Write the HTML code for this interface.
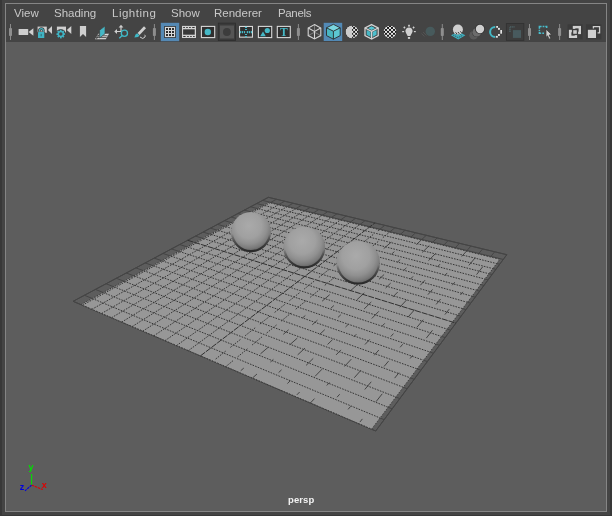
<!DOCTYPE html>
<html><head><meta charset="utf-8">
<style>
html,body{margin:0;padding:0}
body{width:612px;height:516px;overflow:hidden;position:relative;background:#444444;font-family:"Liberation Sans",sans-serif}
.ol{position:absolute;background:#383838}
#panel{position:absolute;left:5px;top:3px;width:600px;height:507px;border:1px solid #858585;background:#444444}
#vp{position:absolute;left:6px;top:42px;width:600px;height:469px;background:#5d5d5d}
.mi{position:absolute;will-change:transform;top:6px;font-size:11.5px;color:#c8c8c8;line-height:14px;white-space:nowrap}
#persp{position:absolute;left:288.3px;top:494px;font-size:9.5px;font-weight:bold;color:#f2f2f2;letter-spacing:0.1px;will-change:transform}
</style></head><body>
<div class="ol" style="left:0;top:0;width:2px;height:516px"></div>
<div class="ol" style="left:610px;top:0;width:2px;height:516px"></div>
<div class="ol" style="left:0;top:515px;width:612px;height:1px"></div>
<div id="panel"></div>
<div id="vp"></div>
<div class="mi" style="left:14px">View</div>
<div class="mi" style="left:53.5px">Shading</div>
<div class="mi" style="left:112px;letter-spacing:0.5px">Lighting</div>
<div class="mi" style="left:170.5px">Show</div>
<div class="mi" style="left:213.7px">Renderer</div>
<div class="mi" style="left:278px;letter-spacing:-0.35px">Panels</div>
<svg width="612" height="516" style="position:absolute;left:0;top:0">
<defs>
<clipPath id="cp"><polygon points="80.87,304.63 268.68,202.47 499.84,259.31 371.55,429.22"/></clipPath>
<radialGradient id="sg" cx="0.45" cy="0.34" r="0.7" fx="0.45" fy="0.34">
<stop offset="0" stop-color="#aaaaaa"/><stop offset="0.45" stop-color="#a0a0a0"/><stop offset="0.65" stop-color="#909090"/><stop offset="0.8" stop-color="#7b7b7b"/><stop offset="0.92" stop-color="#606060"/><stop offset="1" stop-color="#474747"/>
</radialGradient>
<linearGradient id="rim" x1="0" y1="0" x2="0" y2="1"><stop offset="0" stop-color="#000" stop-opacity="0"/><stop offset="0.55" stop-color="#000" stop-opacity="0"/><stop offset="0.78" stop-color="#2a2a2a" stop-opacity="0.6"/><stop offset="1" stop-color="#2a2a2a" stop-opacity="1"/></linearGradient>
</defs>
<g stroke="#454545" stroke-width="1" fill="none">
<line x1="73.10" y1="301.30" x2="375.70" y2="431.00"/>
<line x1="73.10" y1="301.30" x2="268.40" y2="197.30"/>
<line x1="84.45" y1="295.25" x2="384.12" y2="419.68"/>
<line x1="82.37" y1="305.27" x2="276.48" y2="199.25"/>
<line x1="95.42" y1="289.41" x2="392.14" y2="408.89"/>
<line x1="91.85" y1="309.34" x2="284.70" y2="201.22"/>
<line x1="106.03" y1="283.76" x2="399.81" y2="398.57"/>
<line x1="101.55" y1="313.50" x2="293.05" y2="203.24"/>
<line x1="116.29" y1="278.30" x2="407.14" y2="388.71"/>
<line x1="111.49" y1="317.76" x2="301.54" y2="205.28"/>
<line x1="126.22" y1="273.01" x2="414.16" y2="379.28"/>
<line x1="121.67" y1="322.12" x2="310.18" y2="207.36"/>
<line x1="135.83" y1="267.89" x2="420.88" y2="370.24"/>
<line x1="132.10" y1="326.59" x2="318.95" y2="209.47"/>
<line x1="145.15" y1="262.93" x2="427.33" y2="361.57"/>
<line x1="142.78" y1="331.17" x2="327.88" y2="211.62"/>
<line x1="154.18" y1="258.12" x2="433.51" y2="353.26"/>
<line x1="153.73" y1="335.86" x2="336.96" y2="213.81"/>
<line x1="162.94" y1="253.46" x2="439.45" y2="345.27"/>
<line x1="164.96" y1="340.67" x2="346.20" y2="216.03"/>
<line x1="171.43" y1="248.94" x2="445.16" y2="337.59"/>
<line x1="176.48" y1="345.61" x2="355.60" y2="218.29"/>
<line x1="179.68" y1="244.55" x2="450.65" y2="330.21"/>
<line x1="188.30" y1="350.68" x2="365.16" y2="220.60"/>
<line x1="195.47" y1="236.14" x2="461.03" y2="316.25"/>
<line x1="212.89" y1="361.22" x2="384.80" y2="225.33"/>
<line x1="203.03" y1="232.11" x2="465.94" y2="309.64"/>
<line x1="225.69" y1="366.70" x2="394.89" y2="227.76"/>
<line x1="210.38" y1="228.20" x2="470.68" y2="303.28"/>
<line x1="238.83" y1="372.34" x2="405.16" y2="230.23"/>
<line x1="217.53" y1="224.39" x2="475.25" y2="297.13"/>
<line x1="252.35" y1="378.13" x2="415.63" y2="232.75"/>
<line x1="224.49" y1="220.68" x2="479.66" y2="291.19"/>
<line x1="266.24" y1="384.08" x2="426.28" y2="235.31"/>
<line x1="231.26" y1="217.08" x2="483.93" y2="285.45"/>
<line x1="280.53" y1="390.21" x2="437.14" y2="237.93"/>
<line x1="237.86" y1="213.56" x2="488.06" y2="279.90"/>
<line x1="295.24" y1="396.51" x2="448.20" y2="240.59"/>
<line x1="244.28" y1="210.14" x2="492.05" y2="274.54"/>
<line x1="310.38" y1="403.00" x2="459.47" y2="243.30"/>
<line x1="250.54" y1="206.81" x2="495.91" y2="269.34"/>
<line x1="325.98" y1="409.69" x2="470.96" y2="246.07"/>
<line x1="256.65" y1="203.56" x2="499.66" y2="264.31"/>
<line x1="342.05" y1="416.58" x2="482.67" y2="248.89"/>
<line x1="262.60" y1="200.39" x2="503.28" y2="259.43"/>
<line x1="358.61" y1="423.68" x2="494.62" y2="251.77"/>
<line x1="268.40" y1="197.30" x2="506.80" y2="254.70"/>
<line x1="375.70" y1="431.00" x2="506.80" y2="254.70"/>
<polygon points="73.10,301.30 268.40,197.30 506.80,254.70 375.70,431.00"/>
</g>
<polygon points="80.87,304.63 268.68,202.47 499.84,259.31 371.55,429.22" fill="#979797"/>
<g clip-path="url(#cp)" stroke="#363636" stroke-width="1" stroke-dasharray="1.6 1.2" fill="none">
<line x1="73.10" y1="301.30" x2="375.70" y2="431.00"/>
<line x1="84.45" y1="295.25" x2="384.12" y2="419.68"/>
<line x1="95.42" y1="289.41" x2="392.14" y2="408.89"/>
<line x1="106.03" y1="283.76" x2="399.81" y2="398.57"/>
<line x1="116.29" y1="278.30" x2="407.14" y2="388.71"/>
<line x1="126.22" y1="273.01" x2="414.16" y2="379.28"/>
<line x1="135.83" y1="267.89" x2="420.88" y2="370.24"/>
<line x1="145.15" y1="262.93" x2="427.33" y2="361.57"/>
<line x1="154.18" y1="258.12" x2="433.51" y2="353.26"/>
<line x1="162.94" y1="253.46" x2="439.45" y2="345.27"/>
<line x1="171.43" y1="248.94" x2="445.16" y2="337.59"/>
<line x1="179.68" y1="244.55" x2="450.65" y2="330.21"/>
<line x1="195.47" y1="236.14" x2="461.03" y2="316.25"/>
<line x1="203.03" y1="232.11" x2="465.94" y2="309.64"/>
<line x1="210.38" y1="228.20" x2="470.68" y2="303.28"/>
<line x1="217.53" y1="224.39" x2="475.25" y2="297.13"/>
<line x1="224.49" y1="220.68" x2="479.66" y2="291.19"/>
<line x1="231.26" y1="217.08" x2="483.93" y2="285.45"/>
<line x1="237.86" y1="213.56" x2="488.06" y2="279.90"/>
<line x1="244.28" y1="210.14" x2="492.05" y2="274.54"/>
<line x1="250.54" y1="206.81" x2="495.91" y2="269.34"/>
<line x1="256.65" y1="203.56" x2="499.66" y2="264.31"/>
<line x1="262.60" y1="200.39" x2="503.28" y2="259.43"/>
<line x1="268.40" y1="197.30" x2="506.80" y2="254.70"/>
<line x1="73.10" y1="301.30" x2="268.40" y2="197.30"/>
<line x1="82.37" y1="305.27" x2="276.48" y2="199.25"/>
<line x1="91.85" y1="309.34" x2="284.70" y2="201.22"/>
<line x1="101.55" y1="313.50" x2="293.05" y2="203.24"/>
<line x1="111.49" y1="317.76" x2="301.54" y2="205.28"/>
<line x1="121.67" y1="322.12" x2="310.18" y2="207.36"/>
<line x1="132.10" y1="326.59" x2="318.95" y2="209.47"/>
<line x1="142.78" y1="331.17" x2="327.88" y2="211.62"/>
<line x1="153.73" y1="335.86" x2="336.96" y2="213.81"/>
<line x1="164.96" y1="340.67" x2="346.20" y2="216.03"/>
<line x1="176.48" y1="345.61" x2="355.60" y2="218.29"/>
<line x1="188.30" y1="350.68" x2="365.16" y2="220.60"/>
</g>
<g clip-path="url(#cp)" stroke="#363636" stroke-width="1" stroke-dasharray="1.6 1.2 1.6 1.2 1.6 1.2 1.6 1.2 1.6 6" fill="none">
<line x1="212.89" y1="361.22" x2="384.80" y2="225.33" stroke-dashoffset="15.3"/>
<line x1="225.69" y1="366.70" x2="394.89" y2="227.76" stroke-dashoffset="3.4"/>
</g>
<g clip-path="url(#cp)" stroke="#3a3a3a" stroke-width="0.9" stroke-dasharray="7 18 4 22 10 20" fill="none">
<line x1="238.83" y1="372.34" x2="405.16" y2="230.23" stroke-dashoffset="22.5"/>
<line x1="252.35" y1="378.13" x2="415.63" y2="232.75" stroke-dashoffset="0.8"/>
<line x1="266.24" y1="384.08" x2="426.28" y2="235.31" stroke-dashoffset="8.1"/>
<line x1="280.53" y1="390.21" x2="437.14" y2="237.93" stroke-dashoffset="15.4"/>
<line x1="295.24" y1="396.51" x2="448.20" y2="240.59" stroke-dashoffset="22.7"/>
<line x1="310.38" y1="403.00" x2="459.47" y2="243.30" stroke-dashoffset="1.0"/>
<line x1="325.98" y1="409.69" x2="470.96" y2="246.07" stroke-dashoffset="8.3"/>
<line x1="342.05" y1="416.58" x2="482.67" y2="248.89" stroke-dashoffset="15.6"/>
<line x1="358.61" y1="423.68" x2="494.62" y2="251.77" stroke-dashoffset="22.9"/>
<line x1="375.70" y1="431.00" x2="506.80" y2="254.70" stroke-dashoffset="1.2"/>
</g>
<g stroke="#3c3c3c" stroke-width="1" stroke-dasharray="1.5 1.5" fill="none">
<polygon points="80.87,304.63 268.68,202.47 499.84,259.31 371.55,429.22"/>
</g>
<g stroke="#303030" stroke-width="1" stroke-dasharray="6 1" fill="none">
<line x1="187.69" y1="240.28" x2="455.94" y2="323.10"/>
<line x1="200.44" y1="355.88" x2="374.90" y2="222.94"/>
</g>
<circle cx="251" cy="232.1" r="20" fill="url(#sg)"/><circle cx="251" cy="232.1" r="19.0" fill="none" stroke="url(#rim)" stroke-width="2.2"/>
<circle cx="304.3" cy="247.5" r="20.9" fill="url(#sg)"/><circle cx="304.3" cy="247.5" r="19.9" fill="none" stroke="url(#rim)" stroke-width="2.2"/>
<circle cx="358.1" cy="262.7" r="21.8" fill="url(#sg)"/><circle cx="358.1" cy="262.7" r="20.8" fill="none" stroke="url(#rim)" stroke-width="2.2"/>

</svg>
<svg width="612" height="45" style="position:absolute;left:0;top:0">
<defs>
<pattern id="chk" x="387" y="27" width="4" height="3.9" patternUnits="userSpaceOnUse"><rect width="4" height="3.9" fill="#e6e6e6"/><rect width="2" height="1.95" fill="#1a1a1a"/><rect x="2" y="1.95" width="2" height="1.95" fill="#1a1a1a"/></pattern>
<pattern id="chk2" x="353.15" y="27" width="3.9" height="3.9" patternUnits="userSpaceOnUse"><rect width="3.9" height="3.9" fill="#e6e6e6"/><rect width="1.95" height="1.95" fill="#1a1a1a"/><rect x="1.95" y="1.95" width="1.95" height="1.95" fill="#1a1a1a"/></pattern>
</defs>
<!-- separators -->
<rect x="10.0" y="24" width="1" height="16" fill="#8a8a8a"/><rect x="9.0" y="28" width="3" height="8" rx="0.8" fill="#8e8e8e"/>
<rect x="153.9" y="24" width="1" height="16" fill="#8a8a8a"/><rect x="152.9" y="28" width="3" height="8" rx="0.8" fill="#8e8e8e"/>
<rect x="297.9" y="24" width="1" height="16" fill="#8a8a8a"/><rect x="296.9" y="28" width="3" height="8" rx="0.8" fill="#8e8e8e"/>
<rect x="441.8" y="24" width="1" height="16" fill="#8a8a8a"/><rect x="440.8" y="28" width="3" height="8" rx="0.8" fill="#8e8e8e"/>
<rect x="529.0" y="24" width="1" height="16" fill="#8a8a8a"/><rect x="528.0" y="28" width="3" height="8" rx="0.8" fill="#8e8e8e"/>
<rect x="559.1" y="24" width="1" height="16" fill="#8a8a8a"/><rect x="558.1" y="28" width="3" height="8" rx="0.8" fill="#8e8e8e"/>
<!-- camera -->
<g fill="#cfcfcf">
<rect x="18.6" y="28.9" width="9.6" height="6.2" rx="0.6"/>
<polygon points="28.6,32 33.4,28.2 33.4,35.8"/>
<!-- camera lock -->
<rect x="37.6" y="26.6" width="9.2" height="6.2"/>
<polygon points="47.9,30 52,25.9 52,34.1"/>
<!-- camera gear -->
<rect x="56.9" y="26.6" width="9.1" height="6.2"/>
<polygon points="66.8,30 71.3,25.9 71.3,34.1"/>
<!-- bookmark -->
<polygon points="79.9,25.9 86.1,25.9 86.1,37 83,34 79.9,37"/>
</g>
<!-- lock -->
<path d="M39.4 31.6 v-1.1 a1.95 1.95 0 0 1 3.9 0 v1.1" fill="none" stroke="#444" stroke-width="2.8"/>
<rect x="37.3" y="31.4" width="7.8" height="7.2" rx="0.8" fill="#444"/>
<path d="M39.4 31.6 v-1.1 a1.95 1.95 0 0 1 3.9 0 v1.1" fill="none" stroke="#3fb3c3" stroke-width="1.2"/>
<rect x="38" y="31.9" width="6.3" height="6.1" rx="0.5" fill="#3fb3c3"/>
<rect x="40.7" y="33.9" width="0.9" height="2.4" fill="#2d5f66"/>
<!-- gear -->
<circle cx="60.8" cy="34.1" r="5.2" fill="#444"/>
<g fill="#3fb3c3"><rect x="59.90" y="29.80" width="1.7" height="1.8" transform="rotate(0 60.8 34.1)"/><rect x="59.90" y="29.80" width="1.7" height="1.8" transform="rotate(45 60.8 34.1)"/><rect x="59.90" y="29.80" width="1.7" height="1.8" transform="rotate(90 60.8 34.1)"/><rect x="59.90" y="29.80" width="1.7" height="1.8" transform="rotate(135 60.8 34.1)"/><rect x="59.90" y="29.80" width="1.7" height="1.8" transform="rotate(180 60.8 34.1)"/><rect x="59.90" y="29.80" width="1.7" height="1.8" transform="rotate(225 60.8 34.1)"/><rect x="59.90" y="29.80" width="1.7" height="1.8" transform="rotate(270 60.8 34.1)"/><rect x="59.90" y="29.80" width="1.7" height="1.8" transform="rotate(315 60.8 34.1)"/></g>
<circle cx="60.8" cy="34.1" r="2.5" fill="none" stroke="#3fb3c3" stroke-width="1.5"/>
<!-- plane icon -->
<polygon points="98.3,33.8 109,33.8 105.8,39.2 95,39.2" fill="#dcdcdc"/>
<path d="M96 35.8 H107.6 M95.5 37.6 H106.6" stroke="#444" stroke-width="0.9"/>
<path d="M99.6 33.8 L96.4 39.2" stroke="#444" stroke-width="1"/>
<polygon points="99.6,30.2 105,26 105,33.8 99.6,38" fill="#45b8c6" stroke="#444" stroke-width="0.7"/>
<!-- move-magnify -->
<g stroke="#cfcfcf" stroke-width="1.2" fill="none">
<path d="M121 26 v6 M116 31.5 h5"/>
</g>
<polygon points="121,24.8 118.6,27.4 123.4,27.4" fill="#cfcfcf"/>
<polygon points="114.3,31.5 117,29.1 117,33.9" fill="#cfcfcf"/>
<circle cx="124.4" cy="33.3" r="3.1" fill="none" stroke="#3fb8c6" stroke-width="1.3"/>
<line x1="122.2" y1="35.6" x2="119.3" y2="38.3" stroke="#3fb8c6" stroke-width="1.4"/>
<!-- pencil -->
<polygon points="137.6,33 144,26.2 146,28.2 139.6,35" fill="#cfcfcf"/>
<polygon points="134.4,37.6 135.5,34.6 137.2,33.2 139.5,35.5 138,37 " fill="#3fb8c6"/>
<path d="M140 37 q3 3 5 0 q0.6 -1.4 -0.4 -2.2" stroke="#cfcfcf" stroke-width="1" fill="none"/>
<!-- grid button -->
<rect x="160.8" y="22.8" width="18.4" height="18.4" fill="#5589b4"/>
<rect x="164.1" y="26.1" width="11.8" height="11.8" fill="#333"/><rect x="164.9" y="26.9" width="10.2" height="10.2" fill="#dadada"/><rect x="166.05" y="28.05" width="1.9" height="1.9" fill="#1a1a1a"/><rect x="166.05" y="31.05" width="1.9" height="1.9" fill="#1a1a1a"/><rect x="166.05" y="34.05" width="1.9" height="1.9" fill="#1a1a1a"/><rect x="169.05" y="28.05" width="1.9" height="1.9" fill="#1a1a1a"/><rect x="169.05" y="31.05" width="1.9" height="1.9" fill="#1a1a1a"/><rect x="169.05" y="34.05" width="1.9" height="1.9" fill="#1a1a1a"/><rect x="172.05" y="28.05" width="1.9" height="1.9" fill="#1a1a1a"/><rect x="172.05" y="31.05" width="1.9" height="1.9" fill="#1a1a1a"/><rect x="172.05" y="34.05" width="1.9" height="1.9" fill="#1a1a1a"/>
<!-- film gate -->
<rect x="182" y="25.9" width="14" height="12.1" fill="#d2d2d2"/>
<rect x="183.1" y="29.3" width="11.65" height="5.4" fill="#383838"/>
<g fill="#333"><rect x="183.1" y="26.95" width="1.90" height="1" rx="0.4"/><rect x="186.1" y="26.95" width="1.80" height="1" rx="0.4"/><rect x="189" y="26.95" width="1.90" height="1" rx="0.4"/><rect x="192.1" y="26.95" width="2.65" height="1" rx="0.4"/><rect x="183.1" y="36.1" width="2.60" height="1" rx="0.4"/><rect x="187.1" y="36.1" width="1.75" height="1" rx="0.4"/><rect x="190.1" y="36.1" width="1.70" height="1" rx="0.4"/><rect x="193" y="36.1" width="1.75" height="1" rx="0.4"/></g>
<!-- res gate -->
<rect x="201.4" y="26.4" width="13.3" height="11.2" fill="#2f2f2f" stroke="#d8d8d8" stroke-width="1.1"/>
<circle cx="207.8" cy="32" r="3.2" fill="#45b8c6"/>
<!-- gate mask -->
<rect x="218.3" y="23.1" width="17.2" height="17.5" fill="#3a3a3a" stroke="#2e2e2e" stroke-width="0.8"/>
<rect x="220" y="25.5" width="14" height="13" fill="#555555"/>
<circle cx="226.9" cy="32" r="3.9" fill="#3c3c3c"/>
<!-- field chart -->
<rect x="239.55" y="26.45" width="12.9" height="10.7" fill="#2f2f2f" stroke="#d8d8d8" stroke-width="1.1"/>
<g fill="#48bccb"><rect x="239.75" y="30.9" width="1.3" height="2.3" rx="0.5"/><rect x="241.75" y="30.9" width="1.3" height="2.3" rx="0.5"/><rect x="243.85" y="30.9" width="1.3" height="2.3" rx="0.5"/><rect x="246.75" y="30.9" width="1.3" height="2.3" rx="0.5"/><rect x="248.75" y="30.9" width="1.3" height="2.3" rx="0.5"/><rect x="250.75" y="30.9" width="1.3" height="2.3" rx="0.5"/><rect x="244.85" y="26.80" width="2.3" height="1.2" rx="0.5"/><rect x="244.85" y="28.90" width="2.3" height="1.2" rx="0.5"/><rect x="244.85" y="33.90" width="2.3" height="1.2" rx="0.5"/><rect x="244.85" y="36.00" width="2.3" height="1.2" rx="0.5"/></g>
<!-- safe action -->
<rect x="258.4" y="26.4" width="13.3" height="11.2" fill="#2f2f2f" stroke="#d8d8d8" stroke-width="1.1"/>
<polygon points="260.2,36.3 263,31.4 265.8,36.3" fill="#45b8c6"/>
<circle cx="267.3" cy="30.5" r="2.6" fill="#45b8c6"/>
<!-- text T -->
<rect x="277.3" y="26.4" width="13" height="11.2" fill="#2f2f2f" stroke="#d8d8d8" stroke-width="1.1"/>
<text x="283.8" y="36.2" font-family="Liberation Serif" font-weight="bold" font-size="11.5" fill="#45b8c6" text-anchor="middle">T</text>
<!-- wire cube -->
<g fill="none" stroke="#d4d4d4" stroke-width="1.1">
<polygon points="314.5,24.6 320.8,28 320.8,35.6 314.5,39 308.2,35.6 308.2,28"/>
<path d="M308.2 28 L314.5 31.4 L320.8 28 M314.5 31.4 V39"/>
<path d="M314.5 24.6 V32.2 L308.2 35.6 M314.5 32.2 L320.8 35.6" stroke-opacity="0.45" stroke-width="0.9"/>
</g>
<!-- shaded cube button -->
<rect x="323.7" y="22.8" width="18.5" height="18.2" fill="#5289b5"/>
<polygon points="333.4,24.3 340.2,27.8 333.4,31.2 326.5,27.8" fill="#7ad6e0"/>
<polygon points="326.5,27.8 333.4,31.2 333.4,39.2 326.5,35.6" fill="#4ab6c2"/>
<polygon points="340.2,27.8 333.4,31.2 333.4,39.2 340.2,35.6" fill="#5cc6d2"/>
<g fill="none" stroke="#2a2a2a" stroke-width="0.9">
<polygon points="333.4,24.3 340.2,27.8 340.2,35.6 333.4,39.2 326.5,35.6 326.5,27.8"/>
<path d="M326.5 27.8 L333.4 31.2 L340.2 27.8 M333.4 31.2 V39.2"/>
</g>
<!-- half sphere -->
<circle cx="352" cy="32" r="6.2" fill="url(#chk2)"/>
<path d="M352.1 25.8 a6.2 6.2 0 0 0 0 12.4 z" fill="#cccccc"/>
<!-- WOS cube -->
<polygon points="371.6,24.6 378.2,28 378.2,35.6 371.6,39 365,35.6 365,28" fill="#3a3a3a"/>
<polygon points="371.6,26.3 375.3,28.2 371.6,30 367.9,28.2" fill="#55c6d4"/>
<polygon points="366.6,30 370.6,32.1 370.6,37 366.6,34.8" fill="#46b6c4"/>
<polygon points="376.6,30 372.6,32.1 372.6,37 376.6,34.8" fill="#4ec0ce"/>
<g fill="none" stroke="#d4d4d4" stroke-width="1.3">
<polygon points="371.6,24.6 378.2,28 378.2,35.6 371.6,39 365,35.6 365,28"/>
<path d="M365 28 L371.6 31.4 L378.2 28 M371.6 31.4 V39"/>
</g>
<!-- checker sphere -->
<circle cx="390" cy="32" r="6.25" fill="url(#chk)"/>
<!-- light bulb -->
<g fill="#d0d0d0">
<path d="M409 27.6 c2.1 0 3.6 1.6 3.6 3.5 c0 1.5 -1.3 2.7 -2.2 4.9 h-2.8 c-0.9 -2.2 -2.2 -3.4 -2.2 -4.9 c0 -1.9 1.5 -3.5 3.6 -3.5z"/>
<rect x="407.9" y="37" width="2.2" height="1.9"/>
<rect x="408.1" y="24.8" width="1.8" height="1.8"/>
<rect x="402.2" y="31" width="1.9" height="1.2"/>
<rect x="413.9" y="31" width="1.9" height="1.2"/>
<rect x="403.6" y="26.7" width="1.6" height="1.6" transform="rotate(45 404.4 27.5)"/>
<rect x="412.8" y="26.7" width="1.6" height="1.6" transform="rotate(45 413.6 27.5)"/>
</g>
<!-- shadows (dim) -->
<circle cx="430.3" cy="31.4" r="4.7" fill="#475a5c"/>
<path d="M421.5 33.5 l3 3 M423 32 l3.5 3.5" stroke="#555" stroke-width="0.9"/>
<!-- AO sphere -->
<polygon points="451,35.3 454.6,33.4 462,33.4 465.4,35.3 458.2,39.5" fill="#3fb0c0"/>
<path d="M453.2 35.1 L458.2 37.6 L463.2 35.1" fill="none" stroke="#37494c" stroke-width="0.9" stroke-dasharray="1.3 0.9"/><path d="M455.5 34.2 H461" stroke="#37494c" stroke-width="0.8" stroke-dasharray="1.2 1"/>
<circle cx="457.9" cy="29.6" r="5" fill="#cfcfcf"/>
<path d="M455.6 32.3 l1.4 1.8 M458 32 l1.4 1.8 M460.4 31.3 l1.2 1.6" stroke="#3a3a3a" stroke-width="1"/>
<!-- motion blur -->
<circle cx="473.6" cy="35.3" r="4.3" fill="#5a5a5a"/>
<circle cx="476.8" cy="32.2" r="4.9" fill="#404040"/>
<circle cx="476.8" cy="32.2" r="4.3" fill="#6c6c6c"/>
<circle cx="480" cy="29" r="5" fill="#333333"/>
<circle cx="480" cy="29" r="4.2" fill="#cfcfcf"/>
<!-- AA -->
<path d="M495.2 26.9 a5.1 5.1 0 0 0 0 10.2" fill="none" stroke="#44b8c6" stroke-width="2"/>
<g fill="#e4e4e4">
<rect x="496.2" y="26" width="1.8" height="1.8"/>
<rect x="498" y="27.9" width="1.9" height="1.9"/>
<rect x="500.3" y="30" width="1.7" height="3.7"/>
<rect x="498" y="34" width="1.9" height="1.9"/>
<rect x="495.9" y="35.9" width="1.9" height="1.8"/>
</g>
<!-- isolate -->
<rect x="506.4" y="23.5" width="17.4" height="16.9" fill="#3d3d3d" stroke="#333" stroke-width="0.9"/>
<path d="M509.9 31.9 V26.9 H514.7" fill="none" stroke="#4a5a5c" stroke-width="1.8" stroke-dasharray="1.2 0.5"/>
<rect x="512.9" y="30.1" width="8.1" height="7.8" fill="#485a5e"/>
<!-- select cursor -->
<path d="M539.4 28.8 V26.4 H541.6 M542.6 26.4 H544.4 M545.3 26.4 H546.7 V28 M539.4 29.8 V31.2 M539.4 32.1 V33.3 H541.2 M542.3 33.3 H544" fill="none" stroke="#48bccb" stroke-width="1.5"/>
<polygon points="546,29.2 551.8,34.7 549.2,35 550.8,38.4 549.1,39.2 547.5,35.7 546,37.5" fill="#d0d0d0" stroke="#333" stroke-width="0.7"/>
<!-- panel layout buttons -->
<rect x="567.6" y="24.3" width="15" height="15" fill="#3b3b3b"/>
<rect x="572.8" y="25.9" width="8.2" height="8.2" fill="#d0d0d0"/>
<rect x="568.9" y="29.8" width="8.2" height="8.2" fill="#d0d0d0"/>
<rect x="575.3" y="28.4" width="3.3" height="3.3" fill="#3b3b3b"/>
<rect x="571.4" y="32.3" width="3.3" height="3.3" fill="#3b3b3b"/>
<rect x="571.9" y="28.9" width="6.2" height="6.2" fill="#3b3b3b"/>
<rect x="573.2" y="30.2" width="3.6" height="3.6" fill="#c8c8c8"/>
<rect x="585.9" y="24.3" width="15.4" height="15" fill="#3b3b3b"/>
<path d="M593.4 28.6 V26.6 H599.6 V32.8 H597.6" fill="none" stroke="#d0d0d0" stroke-width="1.3"/>
<rect x="587.9" y="29.8" width="8.1" height="8.2" fill="#d0d0d0"/>
</svg>

<svg width="612" height="516" style="position:absolute;left:0;top:0">
<g stroke-width="1.1" fill="none" stroke-linecap="butt">
<line x1="31.6" y1="485.1" x2="31.6" y2="474" stroke="#00e000"/>
<line x1="31.6" y1="485.1" x2="42.8" y2="489.6" stroke="#e00000" stroke-dasharray="2.5 0.8"/>
<line x1="31.6" y1="485.1" x2="25" y2="490.8" stroke="#0000e0" stroke-dasharray="2.5 0.8"/>
</g>
<g font-family="Liberation Sans" font-weight="bold" font-size="9">
<text x="28.6" y="470.2" fill="#00e000">y</text>
<text x="41.8" y="488" fill="#e00000">x</text>
<text x="19.8" y="490" fill="#0000e0">z</text>
</g>
</svg>
<div id="persp">persp</div>
</body></html>
